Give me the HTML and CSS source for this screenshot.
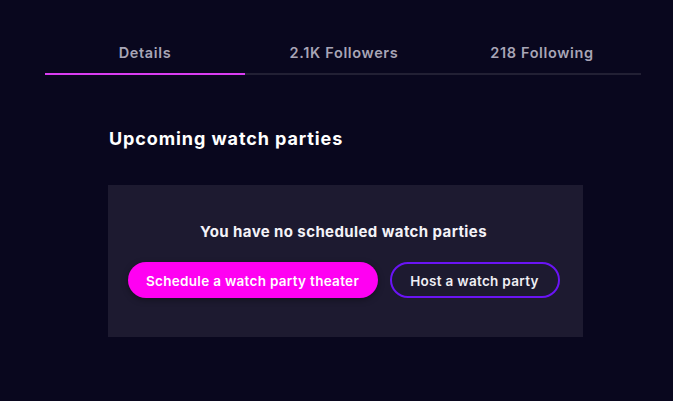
FILE: index.html
```html
<!DOCTYPE html>
<html lang="en">
<head>
<meta charset="utf-8">
<title>Watch parties</title>
<link rel="stylesheet" href="styles.css">
</head>
<body>
<div class="page">
  <nav class="tabs">
    <div class="tab tab-active">Details</div>
    <div class="tab">2.1K Followers</div>
    <div class="tab">218 Following</div>
  </nav>
  <section class="section">
    <h2 class="heading">Upcoming watch parties</h2>
    <div class="card">
      <p class="card-title">You have no scheduled watch parties</p>
      <div class="actions">
        <button class="btn btn-primary">Schedule a watch party theater</button>
        <button class="btn btn-outline">Host a watch party</button>
      </div>
    </div>
  </section>
</div>
</body>
</html>
```
FILE: styles.css
```css
html, body {
  margin: 0;
  padding: 0;
  background: #09071e;
  height: 100%;
}
body {
  font-family: Inter, "Noto Sans", sans-serif;
  color: #f0eff5;
}
.page {
  padding: 42px 0 0 45px;
  width: 596px;
}
.tabs {
  display: grid;
  grid-template-columns: 200px 1fr 1fr;
  border-bottom: 2px solid #222034;
}
.tab {
  text-align: center;
  font-size: 14.5px;
  font-weight: 600;
  line-height: 20px;
  padding-top: 1px;
  padding-bottom: 10px;
  color: #a8a5b6;
  letter-spacing: 0.65px;
  margin-bottom: -2px;
  border-bottom: 2px solid transparent;
}
.tab-active {
  border-bottom-color: #d93df2;
}
.section {
  margin-left: 63px;
  width: 475px;
}
.heading {
  margin: 52px 0 34px 1px;
  font-size: 18px;
  line-height: 24px;
  font-weight: 700;
  color: #ffffff;
  letter-spacing: 0.9px;
}
.card {
  background: #1d1a30;
  padding: 37px 4px 39px 0;
  display: flex;
  flex-direction: column;
  align-items: center;
}
.card-title {
  margin: 0 0 20px;
  font-size: 15px;
  line-height: 20px;
  font-weight: 700;
  color: #f4f3f8;
  letter-spacing: 0.4px;
}
.actions {
  display: flex;
  gap: 12px;
}
.btn {
  height: 36px;
  border-radius: 18px;
  font-family: inherit;
  font-size: 13.5px;
  font-weight: 600;
  letter-spacing: 0.3px;
  color: #ffffff;
  padding: 2px 18px 0;
  cursor: pointer;
}
.btn-primary {
  background: #ff00f2;
  border: none;
  width: 250px;
  box-shadow: 0 2px 6px rgba(0, 0, 0, 0.35);
}
.btn-outline {
  background: transparent;
  border: 2px solid #6a14f5;
  width: 170px;
  color: #f0eff5;
}
```
